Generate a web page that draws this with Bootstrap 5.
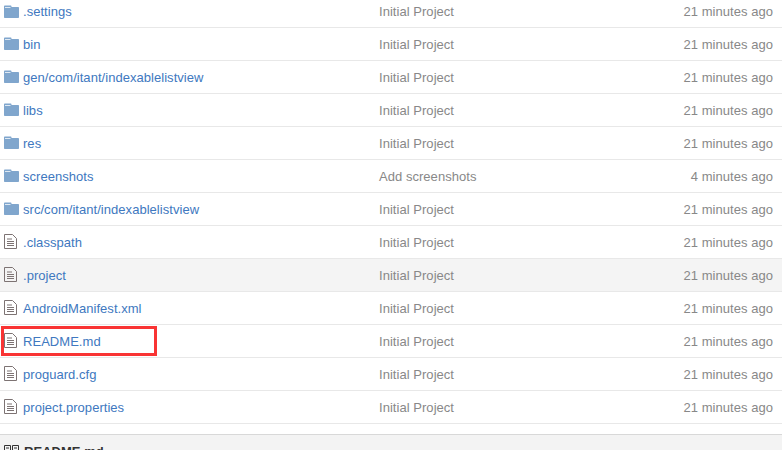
<!DOCTYPE html>
<html lang="en">
<head>
    <meta charset="UTF-8">
    <title>Files</title>
    <link href="https://cdn.jsdelivr.net/npm/bootstrap@5.3.0/dist/css/bootstrap.min.css" rel="stylesheet">
    <style>
        body {
            background: #fff;
            font-family: "Liberation Sans", Arial, sans-serif;
            font-size: 13px;
            letter-spacing: .04px;
            overflow: hidden;
            height: 450px;
        }
        .file-list {
            margin: -6px 0 0 0;
            table-layout: fixed;
            width: 782px;
        }
        .file-list td {
            height: 33px;
            padding: 2px 0 0 0;
            vertical-align: middle;
            border-bottom: 1px solid #e8e8e8;
            line-height: 30px;
            color: #888;
            box-shadow: none;
            white-space: nowrap;
        }
        .file-list td.col-icon { padding-top: 0; width: 23px; }
        .file-list tr:first-child td { padding-top: 4px; line-height: 28px; }
        .file-list tr:first-child td.col-icon { padding-top: 2px; }
        .file-list tr.is-hover td { background: #f4f4f4; }
        .col-name { width: 356px; }
        .col-age { width: 403px; text-align: right; padding-right: 9px !important; }
        .file-list a { color: #4078c0; text-decoration: none; }
        .row-icon { display: block; margin-left: 4px; }
        .readme-box {
            position: absolute;
            left: 1px;
            top: 326px;
            width: 156px;
            height: 30px;
            border: 3px solid #f93434;
        }
        .readme-head {
            margin-top: 10px;
            height: 40px;
            background: #f3f3f3;
            border-top: 1px solid #d8d8d8;
            padding: 9px 0 0 4px;
            font-weight: 700;
            color: #333;
            line-height: 16px;
        }
        .readme-head svg { margin-top: 1px; margin-right: 1px; }
    </style>
</head>
<body>
    <svg width="0" height="0" class="position-absolute">
        <symbol id="ico-folder" viewBox="0 0 15 13">
            <path fill="#80a6cd" d="M0 1.5C0 .9.4.5 1 .5h5.5c.6 0 1 .4 1 1V2H14c.6 0 1 .4 1 1v9c0 .6-.4 1-1 1H1c-.6 0-1-.4-1-1z"/>
            <path fill="#fff" opacity=".75" d="M1 2h5.5v1H1z"/>
        </symbol>
        <symbol id="ico-file" viewBox="0 0 13 15">
            <path fill="none" stroke="#7d7373" d="M.5.5h8l4 4v10H.5z"/>
            <path fill="none" stroke="#7d7373" d="M3 5h5M3 7.5h7M3 9.5h7M3 11.5h7"/>
        </symbol>
    </svg>

    <table class="table file-list">
        <tbody id="rows"></tbody>
    </table>

    <div class="readme-box"></div>
    <div class="readme-head d-flex align-items-start gap-1">
        <svg width="15" height="11" viewBox="0 0 15 11"><path fill="none" stroke="#333" d="M.5.5h6v10h-6zM8.5.5h6v10h-6zM2 3h3M2 5.5h3M10 3h3M10 5.5h3"/></svg>
        <span>README.md</span>
    </div>

    <script>
        // name, icon, commit message, age
        const files = [
            [".settings", "folder", "Initial Project", "21 minutes ago"],
            ["bin", "folder", "Initial Project", "21 minutes ago"],
            ["gen/com/itant/indexablelistview", "folder", "Initial Project", "21 minutes ago"],
            ["libs", "folder", "Initial Project", "21 minutes ago"],
            ["res", "folder", "Initial Project", "21 minutes ago"],
            ["screenshots", "folder", "Add screenshots", "4 minutes ago"],
            ["src/com/itant/indexablelistview", "folder", "Initial Project", "21 minutes ago"],
            [".classpath", "file", "Initial Project", "21 minutes ago"],
            [".project", "file", "Initial Project", "21 minutes ago"],
            ["AndroidManifest.xml", "file", "Initial Project", "21 minutes ago"],
            ["README.md", "file", "Initial Project", "21 minutes ago"],
            ["proguard.cfg", "file", "Initial Project", "21 minutes ago"],
            ["project.properties", "file", "Initial Project", "21 minutes ago"]
        ];
        document.getElementById("rows").innerHTML = files.map((f, i) => {
            const size = f[1] === "folder" ? 'width="15" height="13"' : 'width="13" height="15"';
            return `<tr class="${f[0] === ".project" ? "is-hover" : ""}">
                <td class="col-icon"><svg ${size} class="row-icon"><use href="#ico-${f[1]}"/></svg></td>
                <td class="col-name"><a href="#">${f[0]}</a></td>
                <td>${f[2]}</td>
                <td class="col-age">${f[3]}</td>
            </tr>`;
        }).join("");
    </script>
    <script src="https://cdn.jsdelivr.net/npm/bootstrap@5.3.0/dist/js/bootstrap.bundle.min.js"></script>
</body>
</html>
